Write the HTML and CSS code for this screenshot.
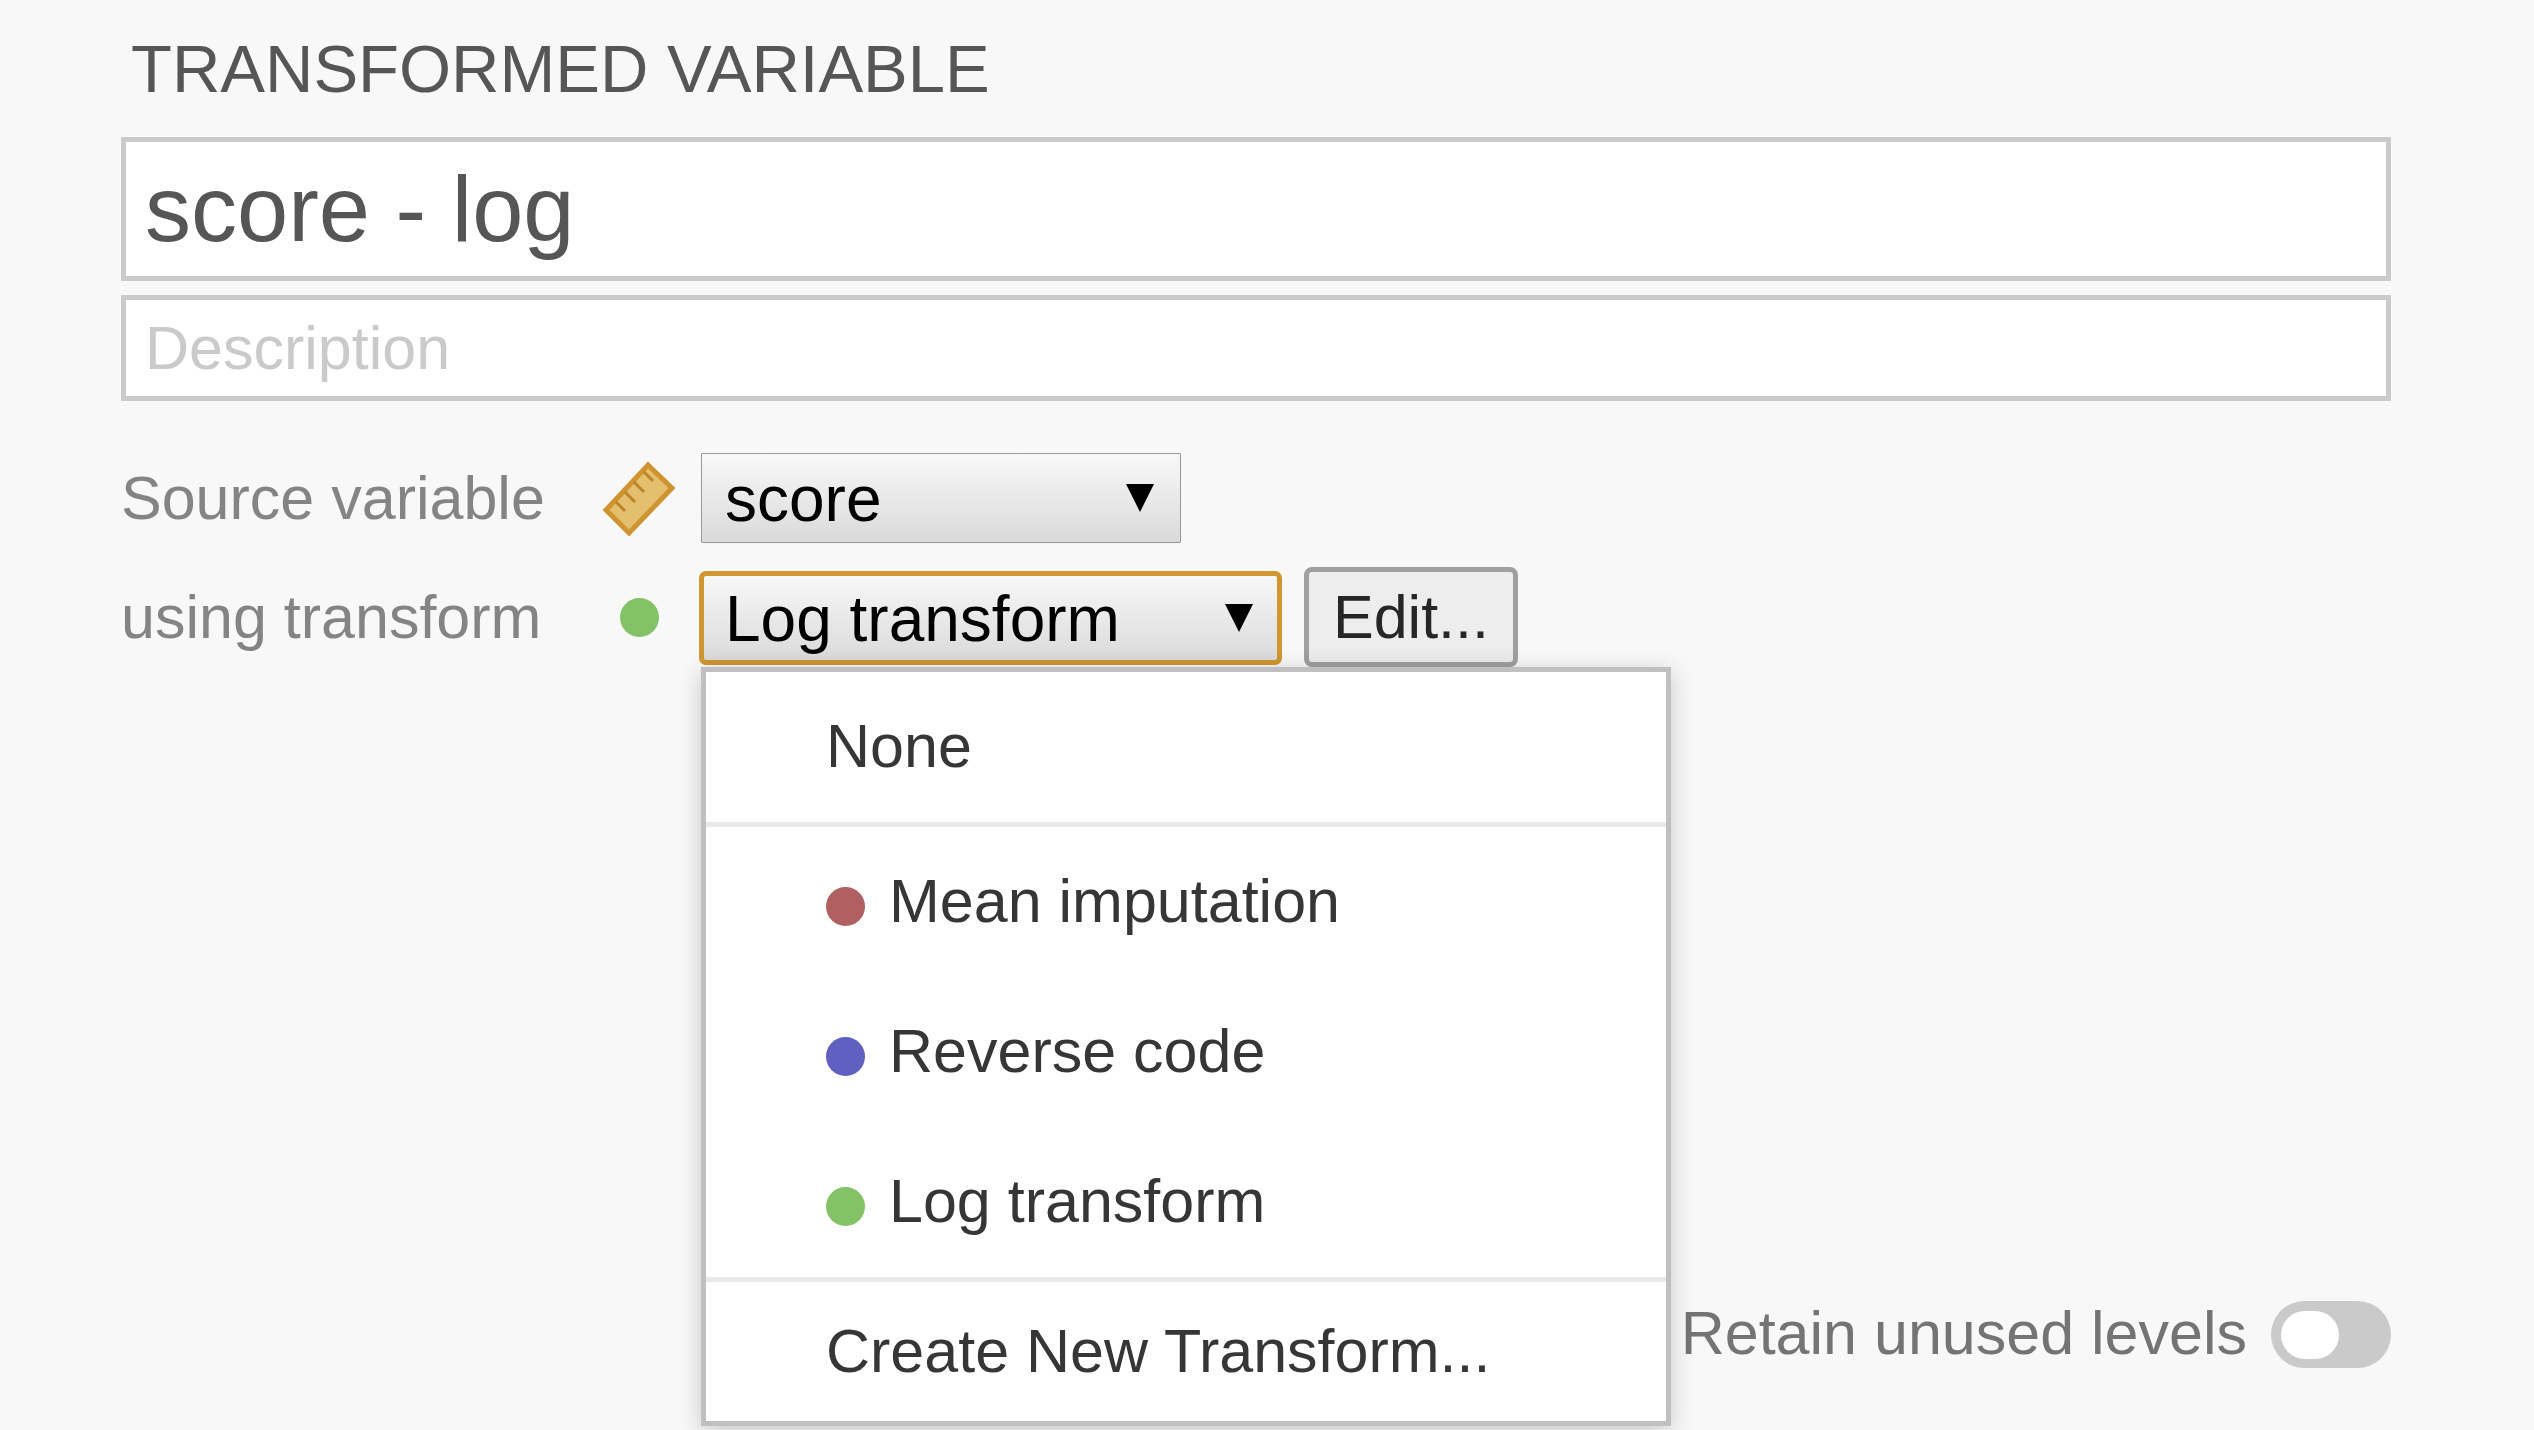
FILE: index.html
```html
<!DOCTYPE html>
<html lang="en">
<head>
    <meta charset="UTF-8">
    <meta name="viewport" content="width=device-width, initial-scale=1.0">
    <title>Transformed Variable</title>
    <link rel="stylesheet" href="styles.css">
</head>
<body>

    <main class="editor">

        <h1 class="editor-title">TRANSFORMED VARIABLE</h1>

        <!-- Name and description -->
        <input type="text" class="field field-name" value="score - log" aria-label="Name">
        <input type="text" class="field field-description" placeholder="Description" aria-label="Description">

        <!-- Source variable -->
        <div class="row">
            <label for="source-variable">Source variable</label>
            <svg class="ruler" viewBox="0 0 78 78" aria-hidden="true">
                <path d="M48 6 L72 29 L29 74 L6 51 Z" fill="#e3bf6e" stroke="#cf932f" stroke-width="5"/>
                <path d="M16 43 L25 52 M25 33 L35 43 M34 23 L44 33 M44 13 L53 22" fill="none" stroke="#bd8529" stroke-width="3"/>
            </svg>
            <div class="controls">
                <div class="dropdown dropdown-source">
                    <select id="source-variable">
                        <option>score</option>
                    </select>
                </div>
            </div>
        </div>

        <!-- Transform -->
        <div class="row">
            <label for="transform">using transform</label>
            <span class="dot dot-green"></span>
            <div class="controls">
                <div class="dropdown dropdown-transform">
                    <select id="transform">
                        <option>None</option>
                        <option>Mean imputation</option>
                        <option>Reverse code</option>
                        <option selected>Log transform</option>
                    </select>
                </div>
                <button type="button" class="edit-button">Edit...</button>

                <div class="menu">
                    <button type="button" class="menu-item">None</button>
                    <div class="menu-group">
                        <button type="button" class="menu-item"><span class="dot dot-red"></span>Mean imputation</button>
                        <button type="button" class="menu-item"><span class="dot dot-blue"></span>Reverse code</button>
                        <button type="button" class="menu-item"><span class="dot dot-green"></span>Log transform</button>
                    </div>
                    <button type="button" class="menu-item menu-create">Create New Transform...</button>
                </div>
            </div>
        </div>

        <div class="footer">
            <label for="retain-levels">Retain unused levels</label>
            <input type="checkbox" id="retain-levels" class="toggle">
        </div>

    </main>

</body>
</html>
```
FILE: styles.css
```css
/* Reset */
* {
    box-sizing: border-box;
    margin: 0;
    padding: 0;
}

body {
    font-family: Arial, "Liberation Sans", sans-serif;
    font-size: 61px;
    background-color: #f8f8f8;
    color: #848484;
}

input, select, button {
    font: inherit;
}

/* Editor */
.editor {
    display: flex;
    flex-direction: column;
    min-height: 100vh;
    padding: 28px 143px 62px 121px;
}

.editor-title {
    padding-left: 10px;
    margin-bottom: 27px;
    font-size: 67px;
    font-weight: normal;
    line-height: 82px;
    color: #565656;
}

/* Text fields */
.field {
    width: 100%;
    padding: 0 19px;
    border: 5px solid #cacaca;
    background-color: #fff;
    color: #565656;
    outline: none;
}

.field-name {
    height: 144px;
    margin-bottom: 14px;
    font-size: 92px;
}

.field-description {
    height: 106px;
    margin-bottom: 52px;
}

.field::placeholder {
    color: #cacaca;
}

/* Rows */
.row {
    display: grid;
    grid-template-columns: 456px 124px 1fr;
    align-items: center;
    margin-bottom: 24px;
}

.row .ruler,
.row .dot {
    justify-self: center;
}

.ruler {
    width: 78px;
    height: 78px;
}

.controls {
    position: relative;
    display: flex;
    align-items: center;
    gap: 24px;
}

/* Dots */
.dot {
    width: 39px;
    height: 39px;
    border-radius: 50%;
}

.dot-red {
    background-color: #b06060;
}

.dot-blue {
    background-color: #6060c0;
}

.dot-green {
    background-color: #84c267;
}

/* Dropdowns */
.dropdown {
    position: relative;
}

.dropdown select {
    appearance: none;
    display: block;
    width: 100%;
    height: 90px;
    padding: 2px 23px 0;
    border: 1px solid #989898;
    border-radius: 1px;
    background: linear-gradient(#f8f8f8, #dadada);
    font-size: 64px;
    color: #000;
}

.dropdown::after {
    content: "";
    position: absolute;
    top: 31px;
    right: 27px;
    width: 28px;
    height: 28px;
    background-color: #000;
    clip-path: polygon(0 0, 100% 0, 50% 100%);
    pointer-events: none;
}

.dropdown-source {
    width: 480px;
}

.dropdown-transform {
    width: 579px;
    margin-top: 2px;
}

.dropdown-transform select {
    border-color: transparent;
    outline: 5px solid #d09630;
    outline-offset: -3px;
    border-radius: 5px;
}

.edit-button {
    height: 100px;
    padding: 0 24px;
    border: 5px solid #a0a0a0;
    border-radius: 8px;
    background-color: #ededed;
    color: #262626;
}

/* Transform menu */
.menu {
    position: absolute;
    top: 100%;
    left: 0;
    width: 970px;
    border: 5px solid #c0c0c0;
    background-color: #fff;
    box-shadow: 0 5px 23px rgba(0, 0, 0, 0.2);
}

.menu-item {
    display: flex;
    align-items: center;
    gap: 24px;
    width: 100%;
    height: 150px;
    padding: 0 120px 2px;
    border: none;
    background: none;
    color: #363636;
    white-space: nowrap;
}

.menu-item .dot {
    margin-top: 10px;
}

.menu-group {
    border-top: 5px solid #e9e9e9;
    border-bottom: 5px solid #e9e9e9;
}

.menu-create {
    height: 139px;
}

/* Footer */
.footer {
    display: flex;
    justify-content: flex-end;
    align-items: center;
    gap: 24px;
    height: 67px;
    margin-top: auto;
    color: #747474;
}

.footer label {
    padding-bottom: 3px;
}

.toggle {
    appearance: none;
    display: flex;
    align-items: center;
    width: 120px;
    height: 67px;
    padding: 0 10px;
    border-radius: 34px;
    background-color: #cacaca;
}

.toggle::before {
    content: "";
    width: 58px;
    height: 48px;
    border-radius: 24px;
    background-color: #fff;
}

.toggle:checked {
    justify-content: flex-end;
    background-color: #84c267;
}
```
